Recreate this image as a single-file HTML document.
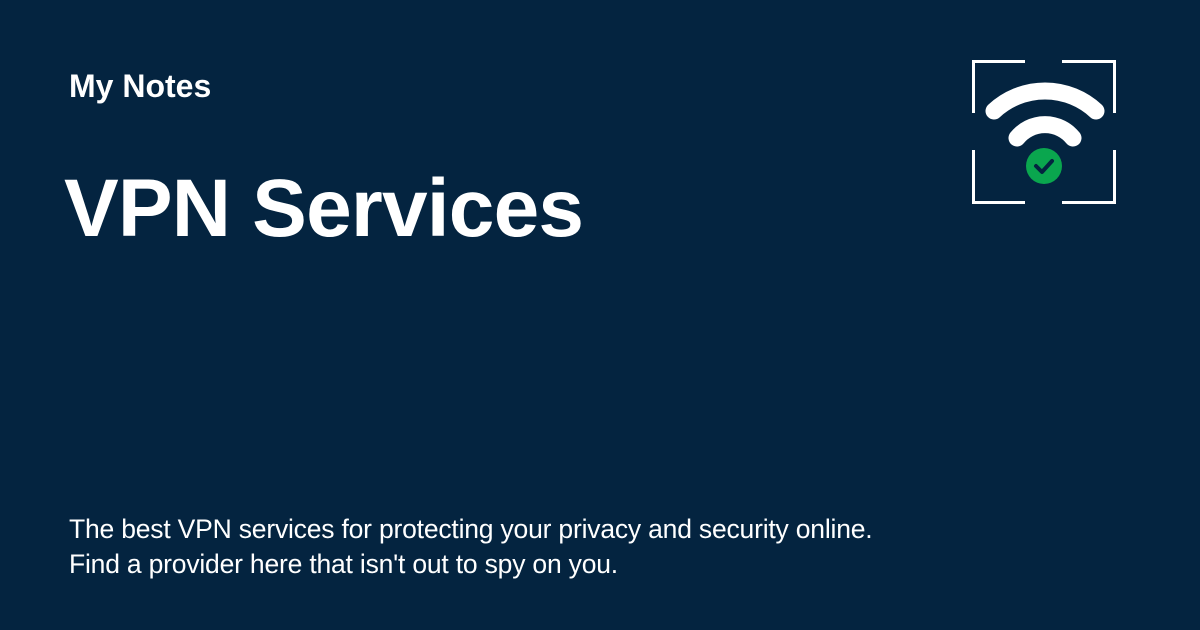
<!DOCTYPE html>
<html><head><style>
html,body{margin:0;padding:0;}
body{width:1200px;height:630px;background:#042440;position:relative;overflow:hidden;font-family:"Liberation Sans",sans-serif;color:#fff;}
.a{position:absolute;left:69px;top:68px;font-size:32px;font-weight:bold;}
.t{position:absolute;left:64px;top:162px;font-size:82px;font-weight:bold;letter-spacing:-0.8px;white-space:nowrap;}
.d{position:absolute;left:69px;top:512px;font-size:26.5px;line-height:35px;letter-spacing:-0.2px;white-space:nowrap;}
svg{position:absolute;left:0;top:0;}
</style></head><body>
<div class="a">My Notes</div>
<div class="t">VPN Services</div>
<div class="d">The best VPN services for protecting your privacy and security online.<br>Find a provider here that isn't out to spy on you.</div>
<svg width="1200" height="630" viewBox="0 0 1200 630">
<g fill="none" stroke="#fff" stroke-width="3">
<path d="M973.5 113V61.5H1025M1062 61.5H1114.5V113M1114.5 150V202.5H1062M1025 202.5H973.5V150"/>
<path d="M994 111A75 75 0 0 1 1096 111" stroke-width="17" stroke-linecap="round"/>
<path d="M1017 138A36 36 0 0 1 1073 138" stroke-width="17" stroke-linecap="round"/>
</g>
<circle cx="1044" cy="166" r="18" fill="#0aa64e"/>
<path d="M1036 166l6 6 10-11" fill="none" stroke="#042440" stroke-width="4" stroke-linecap="round" stroke-linejoin="round"/>
</svg>
</body></html>
